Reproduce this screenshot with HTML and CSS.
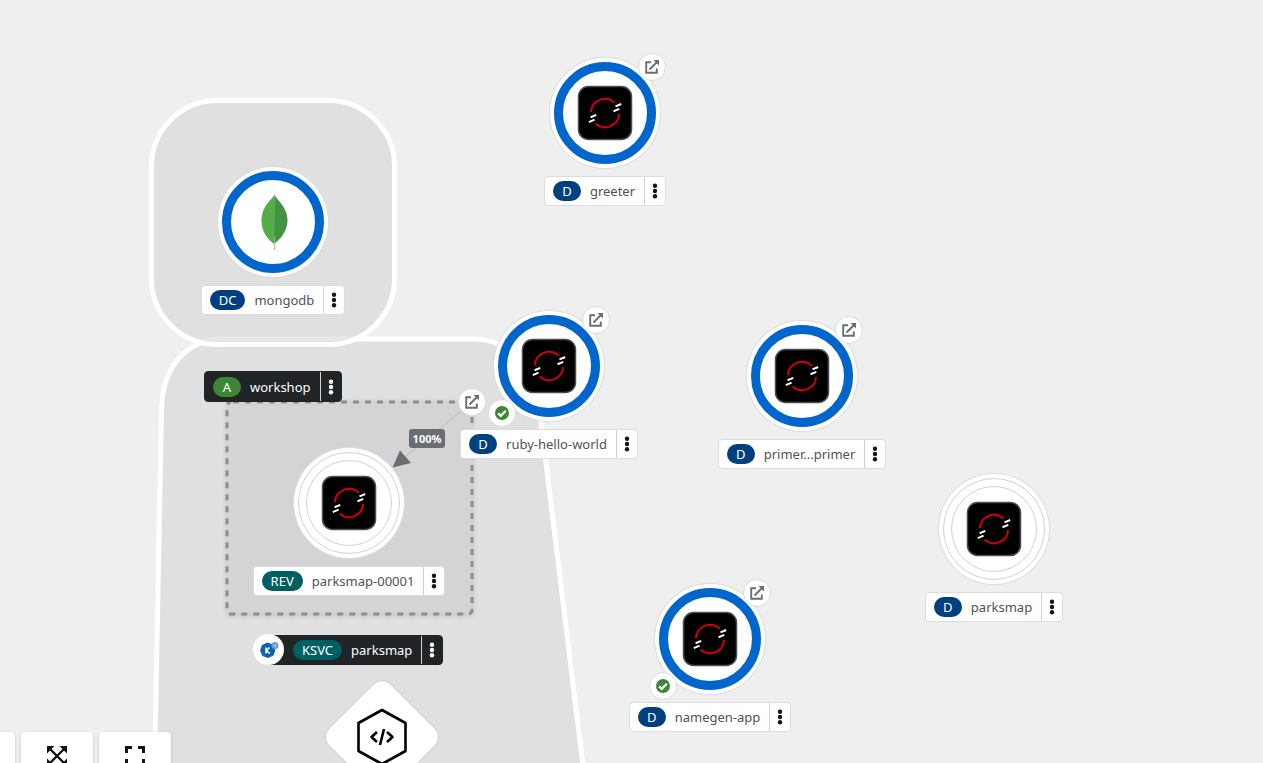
FILE: index.html
```html
<!DOCTYPE html>
<html lang="en">
<head>
<meta charset="utf-8">
<title>Topology</title>
<link rel="stylesheet" href="styles.css">
</head>
<body>
<svg class="defs" aria-hidden="true">
  <symbol id="openshift" viewBox="-28 -28 56 56">
    <rect x="-26.5" y="-26.5" width="53" height="53" rx="10" fill="#000" stroke="#4d4d4d" stroke-width="1.5"/>
    <g fill="none" stroke="#d40000" stroke-width="2">
      <path d="M-14.1-.7A14.1 14.1 0 0 1 9.7-10.2"/>
      <path d="M14.1.7A14.1 14.1 0 0 1-9.4 10.6"/>
    </g>
    <g stroke="#fff" stroke-width="2">
      <path d="M10.5-6.6l5.7-2.4M8.5-1.8l5.8-2.3M-14.4 4.2l5.7-2.3M-16.2 9.1l5.8-2.4"/>
    </g>
  </symbol>
  <symbol id="leaf" viewBox="-28 -28 56 56">
    <path d="M1.3-28C1-23-11.500-18-11.500-1C-11.500 11-4 18 1 22Z" fill="#55ad47"/>
    <path d="M1.300-28C2-23 15-16 14.500-1C14 11 6 18 1 22Z" fill="#439343"/>
    <path d="M1 14h1L2.300 28H1.300Z" fill="#b8a58b"/>
  </symbol>
  <symbol id="open" viewBox="0 0 16 16">
    <path d="M7 3.200H2.200v10.600h10.600V9.500M5.500 10.500L13.500 2.500" fill="none" stroke="#6a6e73" stroke-width="1.900"/>
    <path d="M9.500 1H15v5.500Z" fill="#6a6e73"/>
  </symbol>
  <symbol id="check" viewBox="0 0 16 16">
    <circle cx="8" cy="8" r="7" fill="#3e8635"/>
    <path d="M4.200 8.300l2.600 2.500 5-5" fill="none" stroke="#fff" stroke-width="2.300"/>
  </symbol>
  <symbol id="kebab" viewBox="0 0 6 16">
    <circle cx="3" cy="2.700" r="2.200"/><circle cx="3" cy="8" r="2.200"/><circle cx="3" cy="13.300" r="2.200"/>
  </symbol>
</svg>

<main class="canvas">
  <svg class="layer" aria-hidden="true">
    <path class="area" d="M152 900L161.500 410C162 370 184 339 224 339H472C516 339 536 372 541 422L600 905Z"/>
    <rect class="area" x="151.500" y="100.500" width="243" height="244" rx="66"/>
    <rect class="revisions" x="227" y="402" width="245" height="212" rx="4"/>
    <path class="edge" d="M472 402L404 458"/>
    <path class="arrow" d="M392.500 467.500L400 450.500L411 463Z"/>
  </svg>
  <span class="traffic">100%</span>

  <section class="node mongodb">
    <button class="disc ring" aria-label="mongodb"><svg class="logo"><use href="#leaf"/></svg></button>
    <div class="label"><span class="badge">DC</span><span class="name">mongodb</span><button class="menu" aria-label="mongodb actions"><svg><use href="#kebab"/></svg></button></div>
  </section>

  <section class="node greeter">
    <button class="disc ring" aria-label="greeter"><svg class="logo"><use href="#openshift"/></svg></button>
    <a class="deco url" href="#greeter" aria-label="Open greeter"><svg><use href="#open"/></svg></a>
    <div class="label"><span class="badge">D</span><span class="name">greeter</span><button class="menu" aria-label="greeter actions"><svg><use href="#kebab"/></svg></button></div>
  </section>

  <section class="node revision">
    <button class="disc pods" aria-label="parksmap-00001"><svg class="logo"><use href="#openshift"/></svg></button>
    <div class="label"><span class="badge teal">REV</span><span class="name">parksmap-00001</span><button class="menu" aria-label="parksmap-00001 actions"><svg><use href="#kebab"/></svg></button></div>
  </section>
  <a class="deco service-url" href="#parksmap" aria-label="Open parksmap"><svg><use href="#open"/></svg></a>

  <section class="node ruby">
    <button class="disc ring" aria-label="ruby-hello-world"><svg class="logo"><use href="#openshift"/></svg></button>
    <a class="deco url" href="#ruby" aria-label="Open ruby-hello-world"><svg><use href="#open"/></svg></a>
    <a class="deco build" href="#ruby-build" aria-label="Build complete"><svg><use href="#check"/></svg></a>
    <div class="label"><span class="badge">D</span><span class="name">ruby-hello-world</span><button class="menu" aria-label="ruby-hello-world actions"><svg><use href="#kebab"/></svg></button></div>
  </section>

  <section class="node primer">
    <button class="disc ring" aria-label="primer"><svg class="logo"><use href="#openshift"/></svg></button>
    <a class="deco url" href="#primer" aria-label="Open primer"><svg><use href="#open"/></svg></a>
    <div class="label"><span class="badge">D</span><span class="name">primer...primer</span><button class="menu" aria-label="primer actions"><svg><use href="#kebab"/></svg></button></div>
  </section>

  <section class="node parksmap">
    <button class="disc pods" aria-label="parksmap"><svg class="logo"><use href="#openshift"/></svg></button>
    <div class="label"><span class="badge">D</span><span class="name">parksmap</span><button class="menu" aria-label="parksmap actions"><svg><use href="#kebab"/></svg></button></div>
  </section>

  <section class="node namegen">
    <button class="disc ring" aria-label="namegen-app"><svg class="logo"><use href="#openshift"/></svg></button>
    <a class="deco url" href="#namegen" aria-label="Open namegen-app"><svg><use href="#open"/></svg></a>
    <a class="deco build" href="#namegen-build" aria-label="Build complete"><svg><use href="#check"/></svg></a>
    <div class="label"><span class="badge">D</span><span class="name">namegen-app</span><button class="menu" aria-label="namegen-app actions"><svg><use href="#kebab"/></svg></button></div>
  </section>

  <div class="label dark workshop"><span class="badge green">A</span><span class="name">workshop</span><button class="menu" aria-label="workshop actions"><svg><use href="#kebab"/></svg></button></div>

  <div class="label dark service">
    <span class="knative"><svg viewBox="0 0 20 20" aria-hidden="true">
      <path d="M8.500 2.500L14 4.500L16.500 10L14.500 15.500L9 18L3.500 16L1 10.500L3 5Z" fill="#0865ad"/>
      <circle cx="16" cy="5.500" r="3.500" fill="#6a9bd0"/><circle cx="16" cy="5.500" r="1.500" fill="#9cbce0"/>
      <path d="M7 7.500v6M10.500 7.500L7.500 10.500L10.700 13.500" fill="none" stroke="#fff" stroke-width="1.500"/>
    </svg></span>
    <span class="badge teal">KSVC</span><span class="name">parksmap</span><button class="menu" aria-label="parksmap service actions"><svg><use href="#kebab"/></svg></button>
  </div>

  <button class="source" aria-label="Event source">
    <svg viewBox="-60 -60 120 120" aria-hidden="true">
      <rect x="-43" y="-43" width="86" height="86" rx="12" transform="rotate(45)" fill="#fff"/>
      <g fill="none" stroke="#000" stroke-width="2.600" stroke-linejoin="round">
        <path d="M0-27L23.500-14V14L0 27L-23.500 14V-14Z"/>
        <path d="M-5-5L-10.500 0L-5 5M5-5L10.500 0L5 5M2-8L-2 8"/>
      </g>
    </svg>
  </button>

  <nav class="toolbar" aria-label="View controls">
    <button aria-label="Zoom out"></button>
    <button aria-label="Fit to screen"><svg viewBox="0 0 20 20"><path d="M3 3L17 17M17 3L3 17" stroke="#151515" stroke-width="2.400"/><path d="M0 0h7.500L0 7.500ZM20 0v7.500L12.500 0ZM0 20v-7.500L7.500 20ZM20 20h-7.500L20 12.500Z" fill="#151515"/></svg></button>
    <button aria-label="Reset view"><svg viewBox="0 0 20 20"><path d="M1.500 7V1.500H7M13 1.500h5.500V7M18.500 13v5.500H13M7 18.500H1.500V13" fill="none" stroke="#151515" stroke-width="3"/></svg></button>
  </nav>
</main>
</body>
</html>
```
FILE: styles.css
```css
* { box-sizing: border-box; }
body {
  margin: 0;
  background: #efefef;
  font-family: "Noto Sans", "Open Sans", sans-serif;
  font-size: 13px;
}
button { border: 0; padding: 0; background: none; font: inherit; cursor: pointer; }
.defs { position: absolute; width: 0; height: 0; }

.canvas { position: relative; height: 100vh; overflow: hidden; }
.layer { position: absolute; inset: 0; width: 100%; height: 100%; }
.area { fill: rgba(212, 212, 212, .56); stroke: #fff; stroke-width: 5; }
.revisions {
  fill: #d4d4d4;
  stroke: #8a8d90;
  stroke-width: 3;
  stroke-dasharray: 6 6;
  stroke-dashoffset: -2;
  filter: drop-shadow(0 1px 2px rgba(0, 0, 0, .15));
}
.edge { stroke: #b8bbbe; stroke-width: 1; }
.arrow { fill: #6a6e73; }
.traffic {
  position: absolute;
  left: 409px;
  top: 429px;
  width: 36px;
  border-radius: 3px;
  background: #6a6e73;
  color: #fff;
  font-size: 11px;
  font-weight: 700;
  line-height: 19px;
  text-align: center;
}

/* Nodes */
.node {
  position: absolute;
  display: flex;
  flex-direction: column;
  align-items: center;
  gap: 8px;
  width: 200px;
}
.greeter { left: 505px; top: 58px; }
.mongodb { left: 173px; top: 167px; }
.ruby { left: 449px; top: 311px; }
.primer { left: 702px; top: 321px; }
.parksmap { left: 894px; top: 474px; }
.namegen { left: 610px; top: 584px; }
.revision { left: 249px; top: 448px; }

.disc {
  position: relative;
  display: grid;
  place-items: center;
  width: 110px;
  height: 110px;
  border-radius: 50%;
  background: #fff;
  box-shadow: 0 0 1px 1px #dcdcdc;
}
.disc::before, .pods::after {
  content: "";
  position: absolute;
  inset: 4px;
  border-radius: 50%;
}
.ring::before { border: 9px solid #06c; }
.pods::before { border: 1px solid #d2d2d2; }
.pods::after { inset: 12px; border: 1px solid #d2d2d2; }
.logo { width: 56px; height: 56px; }

.deco {
  position: absolute;
  display: grid;
  place-items: center;
  width: 28px;
  height: 28px;
  border: 1px solid #dcdcdc;
  border-radius: 50%;
  background: #fff;
}
.deco svg { width: 16px; height: 16px; }
.url { left: 133px; top: -5px; }
.build { left: 39px; top: 88px; }
.service-url { left: 458px; top: 388px; }

/* Labels */
.label {
  display: flex;
  align-items: center;
  height: 30px;
  padding-left: 8px;
  border: 1px solid #dcdcdc;
  border-radius: 4px;
  background: #fff;
  color: #4d5258;
  white-space: nowrap;
}
.badge {
  min-width: 28px;
  padding: 0 9px;
  border-radius: 10px;
  background: #004080;
  color: #fff;
  line-height: 20px;
  text-align: center;
}
.teal { background: #005f60; }
.green { background: #3e8635; }
.name { padding: 0 9px; }
.menu {
  display: grid;
  place-items: center;
  align-self: stretch;
  width: 21px;
  border-left: 1px solid #d2d2d2;
}
.menu svg { width: 6px; height: 16px; fill: #151515; }
.dark { position: absolute; border-color: #212427; background: #212427; color: #fff; }
.dark .menu svg { fill: #fff; }
.workshop { left: 204px; top: 371px; height: 31px; }
.service { left: 264px; top: 635px; padding-left: 28px; }
.knative {
  position: absolute;
  left: -12px;
  top: -2px;
  display: grid;
  place-items: center;
  width: 31px;
  height: 31px;
  border-radius: 50%;
  background: #fff;
}
.knative svg { width: 20px; height: 20px; }

.source { position: absolute; left: 322px; top: 677px; width: 120px; height: 120px; }
.source svg { display: block; width: 100%; filter: drop-shadow(0 0 1px rgba(0, 0, 0, .15)); }

.toolbar { position: absolute; left: -57px; bottom: -17px; display: flex; gap: 6px; }
.toolbar button {
  display: grid;
  place-items: center;
  width: 72px;
  height: 48px;
  border-radius: 4px;
  background: #fff;
  box-shadow: 0 1px 3px rgba(0, 0, 0, .2);
}
.toolbar svg { width: 20px; height: 20px; }
```
